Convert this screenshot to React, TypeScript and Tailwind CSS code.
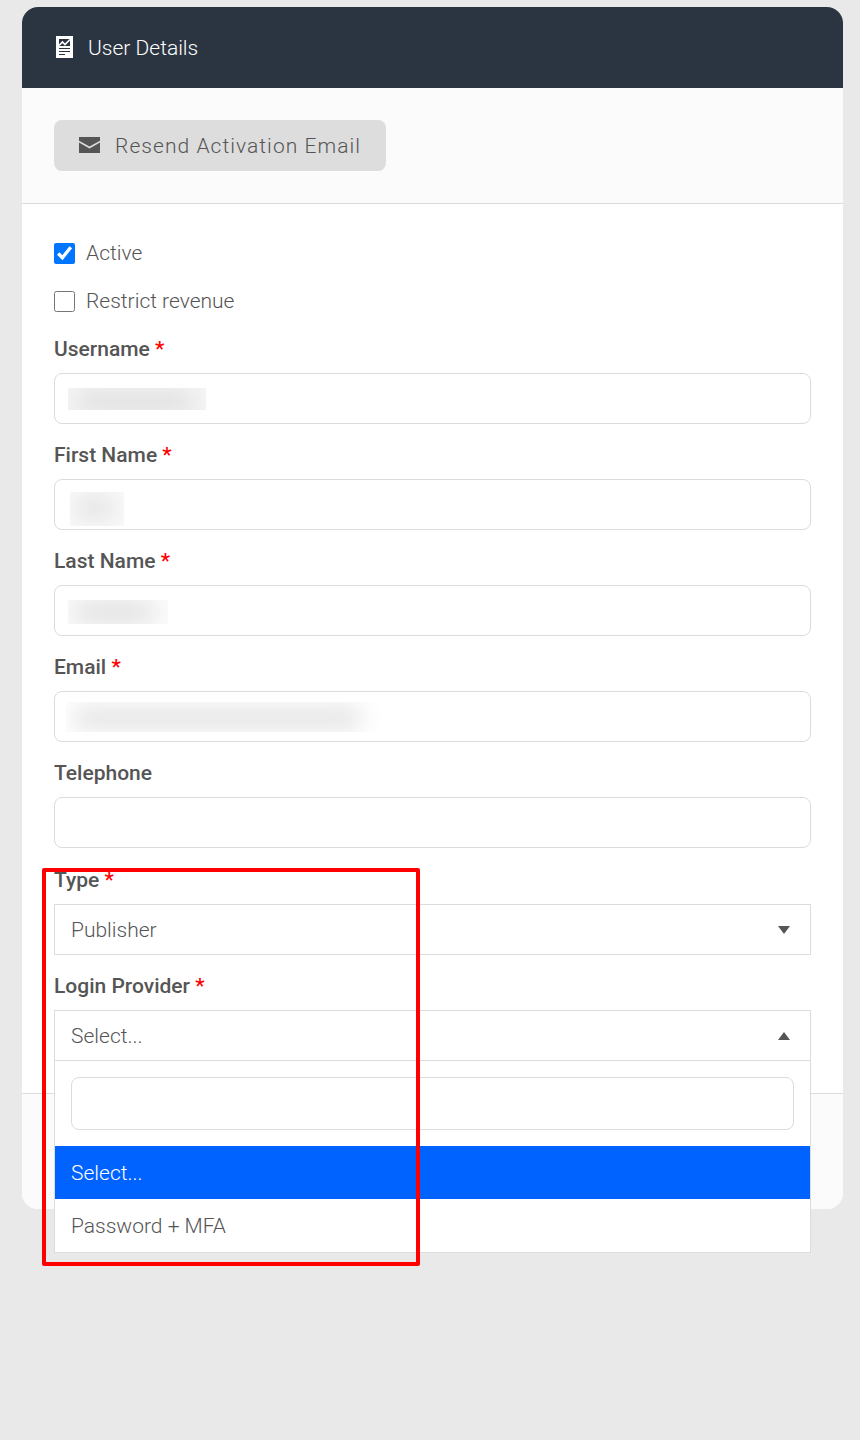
import { useState, ReactNode } from 'react'

interface TextField {
  id: string
  label: string
  required?: boolean
  mask?: { box: string; smudge: string }
}

const textFields: TextField[] = [
  {
    id: 'username',
    label: 'Username',
    required: true,
    mask: { box: 'left-[14px] top-[15px] w-[138px] h-[22px] bg-[#f6f6f6]', smudge: 'left-2 right-3 top-1 h-5 bg-[#dcdcdc]' },
  },
  {
    id: 'first-name',
    label: 'First Name',
    required: true,
    mask: { box: 'left-4 top-[13px] w-[54px] h-[34px] bg-[#f9f9f9]', smudge: 'left-2 right-3 top-2 h-4 bg-[#d8d8d8]' },
  },
  {
    id: 'last-name',
    label: 'Last Name',
    required: true,
    mask: { box: 'left-[14px] top-[15px] w-[100px] h-6 bg-[#fbfbfb]', smudge: 'left-2 right-4 top-1 h-4 bg-[#d6d6d6]' },
  },
  {
    id: 'email',
    label: 'Email',
    required: true,
    mask: { box: 'left-3 top-[11px] w-[314px] h-[30px]', smudge: 'left-2 right-5 top-2 h-4 bg-[#d8d8d8]' },
  },
  { id: 'telephone', label: 'Telephone' },
]

const providers = ['Select...', 'Password + MFA']

const control = 'block w-full h-[51px] border border-[#dcdcdc] bg-white px-4 outline-none'

function ReportIcon() {
  return (
    <svg width="17" height="22" viewBox="0 0 17 22" aria-hidden="true">
      <rect width="17" height="22" fill="#fff" />
      <rect x="3" y="3" width="11" height="7" fill="#2b3541" />
      <path d="M3 9.5L6.5 6L9 8.5L14 3.5" fill="none" stroke="#fff" strokeWidth="1.6" />
      <path d="M3 12.5H14M3 15.5H14M3 18.5H9" stroke="#2b3541" strokeWidth="1.2" />
    </svg>
  )
}

function MailIcon() {
  return (
    <svg width="21" height="16" viewBox="0 0 21 16" aria-hidden="true" fill="#555">
      <path d="M0 0H21V3.8L10.5 9.6L0 3.8Z" />
      <path d="M0 5.6L10.5 11.4L21 5.6V16H0Z" />
    </svg>
  )
}

function Arrow({ up }: { up?: boolean }) {
  return (
    <svg
      width="12"
      height="8"
      viewBox="0 0 12 8"
      aria-hidden="true"
      fill="#555"
      className="pointer-events-none absolute right-[21px] top-[22px]"
    >
      <path d={up ? 'M0 8L6 0L12 8Z' : 'M0 0H12L6 8Z'} />
    </svg>
  )
}

function Field({ id, label, required, children }: { id: string; label: string; required?: boolean; children: ReactNode }) {
  return (
    <div>
      <label htmlFor={id} className="block mb-2 leading-8 font-medium">
        {label}
        {required && <span className="text-[#ff0000]"> *</span>}
      </label>
      <div className="relative">{children}</div>
    </div>
  )
}

export default function App() {
  const [active, setActive] = useState(true)
  const [restrict, setRestrict] = useState(false)
  const [open, setOpen] = useState(true)
  const [provider, setProvider] = useState(providers[0])
  const [search, setSearch] = useState('')

  const matches = providers.filter(p => p.toLowerCase().includes(search.toLowerCase()))

  return (
    <div className="min-h-screen bg-[#e9e9e9] pt-[7px] pl-[22px] pr-[17px] pb-8 font-[Roboto,sans-serif] font-light text-[21px] text-[#555]">
      <main className="rounded-2xl bg-white">
        <header className="flex items-center gap-[15px] h-[81px] rounded-t-2xl bg-[#2b3541] pl-[34px] pb-0.5 text-white">
          <ReportIcon />
          <h1 className="pt-1">User Details</h1>
        </header>

        <div className="border-b border-[#dcdcdc] bg-[#fbfbfb] px-8 py-8">
          <button type="button" className="flex items-center gap-[15px] h-[51px] rounded-lg bg-[#dddddd] px-[25px] pb-0.5 tracking-wider">
            <MailIcon />
            <span className="pt-1">Resend Activation Email</span>
          </button>
        </div>

        <form className="flex flex-col gap-[15px] px-8 pt-[33px] pb-8">
          <label className="flex items-center gap-[11px] h-[33px]">
            <input
              type="checkbox"
              checked={active}
              onChange={e => setActive(e.target.checked)}
              className="size-[21px] accent-[#0075ff]"
            />
            Active
          </label>
          <label className="flex items-center gap-[11px] h-[33px]">
            <input
              type="checkbox"
              checked={restrict}
              onChange={e => setRestrict(e.target.checked)}
              className="size-[21px] accent-[#0075ff]"
            />
            Restrict revenue
          </label>

          {textFields.map(field => (
            <Field key={field.id} id={field.id} label={field.label} required={field.required}>
              <input id={field.id} type="text" className={`${control} rounded-lg`} />
              {field.mask && (
                <span className={`pointer-events-none absolute overflow-hidden ${field.mask.box}`}>
                  <span className={`absolute blur-md ${field.mask.smudge}`} />
                </span>
              )}
            </Field>
          ))}

          <div className="relative flex flex-col gap-[15px] pt-px">
            <Field id="type" label="Type" required>
              <select id="type" className={`${control} pt-0.5 appearance-none`}>
                <option>Publisher</option>
              </select>
              <Arrow />
            </Field>

            <Field id="provider" label="Login Provider" required>
              <select
                id="provider"
                value={provider}
                onChange={e => setProvider(e.target.value)}
                onMouseDown={e => { e.preventDefault(); setOpen(!open) }}
                className={`${control} pt-0.5 appearance-none`}
              >
                {providers.map(p => <option key={p}>{p}</option>)}
              </select>
              <Arrow up={open} />

              {open && (
                <div className="absolute top-full inset-x-0 z-10 border border-t-0 border-[#dcdcdc] bg-white">
                  <div className="p-4">
                    <input
                      type="text"
                      aria-label="Search"
                      value={search}
                      onChange={e => setSearch(e.target.value)}
                      className="block w-full h-[53px] rounded-lg border border-[#dcdcdc] px-4 outline-none"
                    />
                  </div>
                  {matches.map(p => (
                    <button
                      key={p}
                      type="button"
                      onClick={() => { setProvider(p); setOpen(false) }}
                      className={`block w-full h-[53px] px-4 pt-0.5 text-left ${p === provider ? 'bg-[#0062ff] text-white' : ''}`}
                    >
                      {p}
                    </button>
                  ))}
                </div>
              )}
            </Field>

            <div className="pointer-events-none absolute -left-3 top-[5px] z-20 w-[378px] h-[398px] rounded-xs border-4 border-[#ff0000]" />
          </div>
        </form>

        <footer className="h-[116px] rounded-b-2xl border-t border-[#dcdcdc] bg-[#fbfbfb]" />
      </main>
    </div>
  )
}
